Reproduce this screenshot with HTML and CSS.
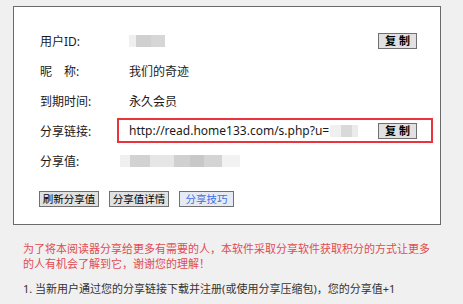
FILE: index.html
```html
<!DOCTYPE html>
<html lang="zh-CN">
	<head>
		<meta charset="UTF-8">
		<meta name="viewport" content="width=device-width, initial-scale=1.0">
		<title>分享</title>
		<link rel="stylesheet" href="styles.css">
	</head>
	<body>
	<div class="panel">
		<div class="rows">
			<div class="row">
				<span class="label">用户ID:</span>
				<div class="value">
					<span class="blur blur-id"></span>
					<button class="copy">复 制</button>
				</div>
			</div>
			<div class="row">
				<span class="label">昵&emsp;称:</span>
				<div class="value">我们的奇迹</div>
			</div>
			<div class="row">
				<span class="label">到期时间:</span>
				<div class="value">永久会员</div>
			</div>
			<div class="row">
				<span class="label">分享链接:</span>
				<div class="value link">
					<span class="url">http://read.home133.com/s.php?u=<span class="blur blur-u"></span></span>
					<button class="copy">复 制</button>
				</div>
			</div>
			<div class="row">
				<span class="label">分享值:</span>
				<div class="value"><span class="blur blur-val"></span></div>
			</div>
		</div>
		<div class="actions">
			<button class="btn w60">刷新分享值</button>
			<button class="btn w60">分享值详情</button>
			<button class="btn w55 tips">分享技巧</button>
		</div>
	</div>
	<p class="note">为了将本阅读器分享给更多有需要的人，本软件采取分享软件获取积分的方式让更多的人有机会了解到它，谢谢您的理解！</p>
	<p class="rule">1. 当新用户通过您的分享链接下载并注册(或使用分享压缩包)，您的分享值+1</p>
	</body>
</html>
```

FILE: styles.css
```css
body {
	margin: 0;
	background-color: #f0f0f0;
	font-family: "Noto Sans", "Noto Sans CJK SC", sans-serif;
	font-size: 12px;
	color: #1a1a1a;
}

.panel {
	margin: 6px 0 0 13px;
	width: 428px;
	height: 219px;
	background-color: #fff;
	border: 1px solid #6a6a6a;
	padding: 21px 7px 0 26px;
	box-sizing: border-box;
}

.rows {
	display: flex;
	flex-direction: column;
	gap: 5px;
}

.row {
	display: flex;
	height: 25px;
	align-items: center;
}

.label {
	width: 77px;
}

.value {
	flex: 1;
	height: 25px;
	display: flex;
	align-items: center;
	justify-content: space-between;
	padding: 0 16px 0 12px;
	box-sizing: border-box;
}

.value.link {
	border: 2px solid #e8343a;
	padding: 0 14px 0 10px;
}

.url {
	display: flex;
	align-items: center;
}

.copy {
	width: 39px;
	height: 16px;
	padding: 0;
	font-family: inherit;
	font-size: 11px;
	font-weight: 600;
	line-height: 14px;
	color: #000;
	background-color: #e1e1e1;
	border: 1px solid #707070;
	border-radius: 0;
}

.blur {
	display: inline-block;
	height: 12px;
}

.blur-id {
	width: 36px;
	background: linear-gradient(90deg, #efefef 0 20%, #d0d0d0 20% 60%, #d6d6d6 60%);
}

.blur-u {
	width: 28px;
	margin-left: 1px;
	background: linear-gradient(90deg, #f0f0f0 0 40%, #d9d9d9 40% 80%, #ebebeb 80%);
}

.blur-val {
	width: 120px;
	margin-left: -9px;
	background: linear-gradient(90deg, #f0f0f0 0 8%, #d2d2d2 8% 25%, #e6e6e6 25% 45%, #d0d0d0 45% 58%, #c8c8c8 58% 70%, #d4d4d4 70% 85%, #f2f2f2 85%);
}

.actions {
	display: flex;
	gap: 10px;
	margin: 18px 0 0 -1px;
}

.btn {
	height: 16px;
	padding: 0;
	font-family: inherit;
	font-size: 10.5px;
	line-height: 14px;
	color: #000;
	background-color: #e1e1e1;
	border: 1px solid #707070;
	border-radius: 0;
}

.w60 {
	width: 60px;
}

.w55 {
	width: 55px;
}

.btn.tips {
	color: #3d6fe6;
	background-color: #e6ebf3;
}

.note {
	margin: 16px 0 0 23px;
	width: 412px;
	font-size: 11px;
	line-height: 15px;
	color: #e04c50;
}

.rule {
	margin: 10px 0 0 23px;
	width: 430px;
	font-size: 11px;
	line-height: 15px;
	color: #333;
}
```
